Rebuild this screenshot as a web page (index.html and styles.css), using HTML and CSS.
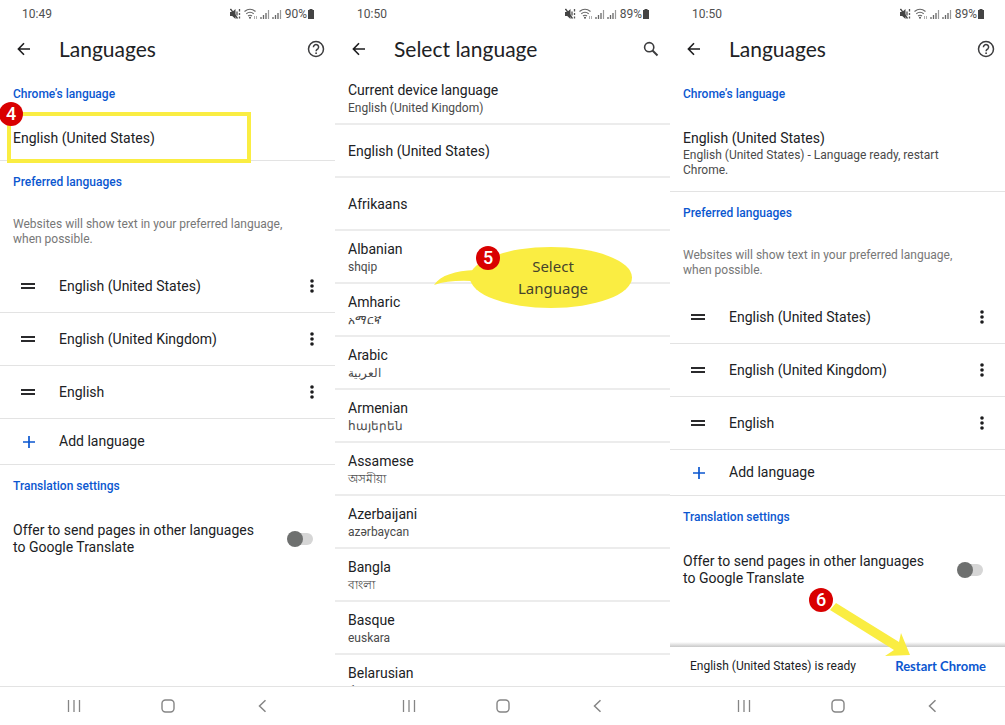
FILE: index.html
```html
<!DOCTYPE html>
<html lang="en">
<head>
<meta charset="utf-8">
<title>Languages</title>
<meta name="viewport" content="width=device-width, initial-scale=1">
<link rel="stylesheet" href="styles.css">
</head>
<body>
<svg class="symbols" aria-hidden="true">
  <symbol id="mute" viewBox="0 0 12 12"><path d="M0 4h2.200L5.500 1v10L2.200 8H0z" fill="#444"/><path d="M.5 1l7 9.500" stroke="#444" stroke-width="1.300"/><path d="M7 3.500v4M9.500 1v2.500M9.500 5v2M9.500 8.500v2" stroke="#555" stroke-width="1.300"/></symbol>
  <symbol id="wifi" viewBox="0 0 14 12"><path d="M.5 3.500q5.500-4.500 11 0M2.300 5.800q3.700-3 7.400 0M4 8q2-1.500 4 0" fill="none" stroke="#666" stroke-width="1.100"/><circle cx="6" cy="9.800" r="1" fill="#555"/><path d="M10.500 8v3M12.500 8v3" stroke="#999" stroke-width=".8"/></symbol>
  <symbol id="signal" viewBox="0 0 10 12"><path d="M1 9v2M3.500 7v4M6 5v6" stroke="#666" stroke-width="1.300"/><path d="M8.500 2v9" stroke="#999" stroke-width="1.200"/></symbol>
  <symbol id="battery" viewBox="0 0 8 12"><path d="M2.500 1h3v1H7v9H1V2h1.500z" fill="#444"/></symbol>
  <symbol id="back" viewBox="0 0 14 14"><path d="M13 7H1.500M7 1.300L1.400 7 7 12.700" fill="none" stroke="#1c1c1e" stroke-width="1.600"/></symbol>
  <symbol id="help" viewBox="0 0 18 18"><circle cx="9" cy="9" r="7.500" fill="none" stroke="#3c3c3e" stroke-width="1.500"/><path d="M6.400 7.200a2.600 2.500 0 1 1 4.500 1.600C9.800 9.700 9.100 10 9.100 11.300" fill="none" stroke="#3c3c3e" stroke-width="1.500"/><circle cx="9.100" cy="13.200" r=".9" fill="#3c3c3e"/></symbol>
  <symbol id="search" viewBox="0 0 16 16"><circle cx="6.200" cy="6.200" r="4.600" fill="none" stroke="#3c3c3e" stroke-width="1.600"/><path d="M9.500 9.500l5 5" stroke="#3c3c3e" stroke-width="1.900"/></symbol>
  <symbol id="drag" viewBox="0 0 14 8"><path d="M0 2h14M0 6h14" stroke="#2a2a2c" stroke-width="2"/></symbol>
  <symbol id="dots" viewBox="0 0 6 14"><g fill="#1c1c1e"><circle cx="3" cy="2" r="1.800"/><circle cx="3" cy="7" r="1.800"/><circle cx="3" cy="12" r="1.800"/></g></symbol>
  <symbol id="plus" viewBox="0 0 12 12"><path d="M6 0v12M0 6h12" stroke="#0b57d0" stroke-width="1.700"/></symbol>
  <symbol id="recents" viewBox="0 0 14 14"><path d="M1.500 1v12M7 1v12M12.500 1v12" stroke="#858585" stroke-width="1.300"/></symbol>
  <symbol id="home" viewBox="0 0 14 14"><rect x="1" y="1" width="12" height="12" rx="3.500" fill="none" stroke="#858585" stroke-width="1.400"/></symbol>
  <symbol id="chevron" viewBox="0 0 14 14"><path d="M10.500 1.200L4.500 7l6 5.800" fill="none" stroke="#858585" stroke-width="1.500"/></symbol>
</svg>
<main class="screens">

  <section class="phone">
    <div class="status"><span>10:49</span>
      <span class="status-icons"><svg class="i-mute"><use href="#mute"/></svg><svg class="i-wifi"><use href="#wifi"/></svg><svg class="i-signal"><use href="#signal"/></svg><svg class="i-signal"><use href="#signal"/></svg><span>90%</span><svg class="i-battery"><use href="#battery"/></svg></span>
    </div>
    <header class="appbar"><button class="icon-button" aria-label="Back"><svg class="i-back"><use href="#back"/></svg></button><h1>Languages</h1><button class="icon-button" aria-label="Help"><svg class="i-help"><use href="#help"/></svg></button></header>
    <div class="content settings">
      <h2>Chrome’s language</h2>
      <div class="current"><p class="label">English (United States)</p><span class="highlight"></span><span class="badge badge-four">4</span></div>
      <h2>Preferred languages</h2>
      <p class="description">Websites will show text in your preferred language, when possible.</p>
      <ul>
        <li class="language"><svg class="i-drag"><use href="#drag"/></svg><span>English (United States)</span><button class="more" aria-label="More options"><svg class="i-dots"><use href="#dots"/></svg></button></li>
        <li class="language"><svg class="i-drag"><use href="#drag"/></svg><span>English (United Kingdom)</span><button class="more" aria-label="More options"><svg class="i-dots"><use href="#dots"/></svg></button></li>
        <li class="language"><svg class="i-drag"><use href="#drag"/></svg><span>English</span><button class="more" aria-label="More options"><svg class="i-dots"><use href="#dots"/></svg></button></li>
      </ul>
      <button class="add"><svg class="i-plus"><use href="#plus"/></svg><span>Add language</span></button>
      <h2>Translation settings</h2>
      <label class="offer"><span>Offer to send pages in other languages to Google Translate</span><input type="checkbox" class="switch"></label>
    </div>
    <nav class="navbar"><button aria-label="Recents"><svg class="i-nav"><use href="#recents"/></svg></button><button aria-label="Home"><svg class="i-nav"><use href="#home"/></svg></button><button aria-label="Back"><svg class="i-nav"><use href="#chevron"/></svg></button></nav>
  </section>

  <section class="phone">
    <div class="status"><span>10:50</span>
      <span class="status-icons"><svg class="i-mute"><use href="#mute"/></svg><svg class="i-wifi"><use href="#wifi"/></svg><svg class="i-signal"><use href="#signal"/></svg><svg class="i-signal"><use href="#signal"/></svg><span>89%</span><svg class="i-battery"><use href="#battery"/></svg></span>
    </div>
    <header class="appbar"><button class="icon-button" aria-label="Back"><svg class="i-back"><use href="#back"/></svg></button><h1>Select language</h1><button class="icon-button" aria-label="Search"><svg class="i-search"><use href="#search"/></svg></button></header>
    <ul class="content picker">
      <li><p class="label">Current device language</p><p class="native">English (United Kingdom)</p></li>
      <li><p class="label">English (United States)</p></li>
      <li><p class="label">Afrikaans</p></li>
      <li><p class="label">Albanian</p><p class="native" lang="sq">shqip</p>
        <div class="callout">
          <svg class="bubble" viewBox="0 0 200 64" aria-hidden="true"><path d="M1 39C8 29 22 25 42 24L38 35Q16 34 1 39Z" fill="#faed42"/><ellipse cx="118" cy="31.500" rx="81" ry="30.500" fill="#faed42"/></svg>
          <p class="callout-text">Select Language</p>
          <span class="badge badge-five">5</span>
        </div>
      </li>
      <li><p class="label">Amharic</p><p class="native" lang="am">አማርኛ</p></li>
      <li><p class="label">Arabic</p><p class="native" lang="ar">العربية</p></li>
      <li><p class="label">Armenian</p><p class="native" lang="hy">հայերեն</p></li>
      <li><p class="label">Assamese</p><p class="native" lang="as">অসমীয়া</p></li>
      <li><p class="label">Azerbaijani</p><p class="native" lang="az">azərbaycan</p></li>
      <li><p class="label">Bangla</p><p class="native" lang="bn">বাংলা</p></li>
      <li><p class="label">Basque</p><p class="native" lang="eu">euskara</p></li>
      <li><p class="label">Belarusian</p><p class="native" lang="be">беларуская</p></li>
    </ul>
    <nav class="navbar"><button aria-label="Recents"><svg class="i-nav"><use href="#recents"/></svg></button><button aria-label="Home"><svg class="i-nav"><use href="#home"/></svg></button><button aria-label="Back"><svg class="i-nav"><use href="#chevron"/></svg></button></nav>
  </section>

  <section class="phone">
    <div class="status"><span>10:50</span>
      <span class="status-icons"><svg class="i-mute"><use href="#mute"/></svg><svg class="i-wifi"><use href="#wifi"/></svg><svg class="i-signal"><use href="#signal"/></svg><svg class="i-signal"><use href="#signal"/></svg><span>89%</span><svg class="i-battery"><use href="#battery"/></svg></span>
    </div>
    <header class="appbar"><button class="icon-button" aria-label="Back"><svg class="i-back"><use href="#back"/></svg></button><h1>Languages</h1><button class="icon-button" aria-label="Help"><svg class="i-help"><use href="#help"/></svg></button></header>
    <div class="content settings">
      <h2>Chrome’s language</h2>
      <div class="current"><p class="label">English (United States)</p><p class="native">English (United States) - Language ready, restart Chrome.</p></div>
      <h2>Preferred languages</h2>
      <p class="description">Websites will show text in your preferred language, when possible.</p>
      <ul>
        <li class="language"><svg class="i-drag"><use href="#drag"/></svg><span>English (United States)</span><button class="more" aria-label="More options"><svg class="i-dots"><use href="#dots"/></svg></button></li>
        <li class="language"><svg class="i-drag"><use href="#drag"/></svg><span>English (United Kingdom)</span><button class="more" aria-label="More options"><svg class="i-dots"><use href="#dots"/></svg></button></li>
        <li class="language"><svg class="i-drag"><use href="#drag"/></svg><span>English</span><button class="more" aria-label="More options"><svg class="i-dots"><use href="#dots"/></svg></button></li>
      </ul>
      <button class="add"><svg class="i-plus"><use href="#plus"/></svg><span>Add language</span></button>
      <h2>Translation settings</h2>
      <label class="offer"><span>Offer to send pages in other languages to Google Translate</span><input type="checkbox" class="switch"></label>
    </div>
    <div class="snackbar"><span>English (United States) is ready</span><button class="restart">Restart Chrome</button>
      <svg class="arrow" viewBox="0 0 90 62" aria-hidden="true"><path d="M11 5L74 44L76 35L85 57L60 58L69 52L5 12Z" fill="#faed42"/></svg>
      <span class="badge badge-six">6</span>
    </div>
    <nav class="navbar"><button aria-label="Recents"><svg class="i-nav"><use href="#recents"/></svg></button><button aria-label="Home"><svg class="i-nav"><use href="#home"/></svg></button><button aria-label="Back"><svg class="i-nav"><use href="#chevron"/></svg></button></nav>
  </section>

</main>
</body>
</html>
```
FILE: styles.css
```css
* { box-sizing: border-box; }
body { margin: 0; background: #fff; color: #202124; font-family: Roboto, "Noto Sans", sans-serif; font-size: 14px; line-height: 17px; }
h1, h2, p, ul { margin: 0; padding: 0; }
ul { list-style: none; }
button { border: 0; padding: 0; background: none; font: inherit; color: inherit; display: flex; align-items: center; cursor: pointer; }
svg { display: block; flex: none; }
.symbols { position: absolute; width: 0; height: 0; }

.screens { display: grid; grid-template-columns: repeat(3, 1fr); height: 100vh; }
.phone { display: flex; flex-direction: column; min-width: 0; min-height: 0; }

.status { display: flex; align-items: center; justify-content: space-between; height: 28px; padding: 0 20px 0 22px; font-size: 12px; color: #505050; flex: none; }
.status-icons { display: flex; align-items: center; gap: 2px; }
.status-icons span { margin: 0 -2px 0 1px; }
.i-mute { width: 12px; height: 12px; }
.i-wifi { width: 14px; height: 12px; }
.i-signal { width: 10px; height: 12px; }
.i-battery { width: 8px; height: 12px; }

.appbar { display: flex; align-items: center; height: 42px; padding: 0 6px 0 10px; flex: none; }
.appbar h1 { flex: 1; margin-left: 22px; font-family: Lato, sans-serif; font-size: 21px; line-height: 26px; font-weight: 400; }
.icon-button { width: 27px; height: 27px; justify-content: center; }
.i-back { width: 14px; height: 14px; }
.i-help { width: 18px; height: 18px; }
.i-search { width: 16px; height: 16px; }

.content { flex: 1; min-height: 0; overflow: hidden; }
.settings { padding-top: 3px; }
h2 { padding: 13px; font-size: 12px; line-height: 16px; font-weight: 500; color: #0b57d0; }
.label { font-size: 14px; line-height: 17px; }
.native { font-size: 12px; line-height: 15px; color: #4a4a4a; }
.current { position: relative; padding: 15px 13px 13px; border-bottom: 1px solid #e3e3e3; }
.current .native { margin-top: 1px; padding-right: 40px; }
.description { padding: 14px 30px 13px 13px; font-size: 12px; line-height: 15px; color: #777; }
.language { display: flex; align-items: center; height: 53px; padding: 0 20px 0 21px; border-bottom: 1px solid #e3e3e3; }
.language span { flex: 1; margin-left: 24px; }
.i-drag { width: 14px; height: 8px; }
.i-dots { width: 6px; height: 14px; }
.add { width: 100%; height: 46px; padding-left: 23px; gap: 24px; border-bottom: 1px solid #e3e3e3; }
.i-plus { width: 12px; height: 12px; }
.offer { display: flex; align-items: center; justify-content: space-between; padding: 15px 22px 15px 13px; }
.offer span { max-width: 250px; }
.switch { appearance: none; position: relative; flex: none; width: 24px; height: 12px; margin: 0; border-radius: 6px; background: #d6d6d6; }
.switch::before { content: ""; position: absolute; left: -2px; top: -2px; width: 16px; height: 16px; border-radius: 50%; background: #6e706f; }

.picker { padding-top: 2px; }
.picker li { position: relative; display: flex; flex-direction: column; justify-content: center; gap: 2px; height: 53px; padding: 2px 13px 0; border-bottom: 2px solid #ececec; }

.navbar { display: flex; justify-content: space-between; align-items: center; height: 39px; padding: 0 66px 0 67px; border-top: 1px solid #e3e3e3; flex: none; }
.i-nav { width: 14px; height: 14px; }

.snackbar { position: relative; display: flex; align-items: center; justify-content: space-between; height: 40px; padding: 0 19px 0 20px; font-size: 12px; flex: none; border-top: 1px solid #c8c8c8; }
.snackbar::before { content: ""; position: absolute; left: 0; right: 0; bottom: 100%; height: 5px; background: linear-gradient(#fff, #c8c8c8); }
.restart { font-family: Lato, sans-serif; font-size: 13px; font-weight: 700; color: #0b57d0; }

.highlight { position: absolute; left: 7px; right: 84px; top: -3px; bottom: -3px; border: 4px solid #faed42; }
.badge { position: absolute; display: flex; align-items: center; justify-content: center; width: 24px; height: 24px; border-radius: 50%; background: #d90000; color: #fff; font-size: 18px; font-weight: 500; padding-bottom: 1px; }
.badge-four { left: -1px; top: -13px; }
.badge-five { left: 43px; top: 0; }
.badge-six { left: 139px; top: -59px; }
.callout { position: absolute; z-index: 1; left: 98px; top: 15px; width: 200px; }
.bubble { width: 200px; height: 64px; }
.callout-text { position: absolute; left: 80px; top: 9px; width: 80px; text-align: center; font-family: "Noto Sans", sans-serif; font-size: 15px; line-height: 22px; color: #45432c; }
.arrow { position: absolute; left: 155px; top: -49px; width: 90px; height: 62px; }
```
